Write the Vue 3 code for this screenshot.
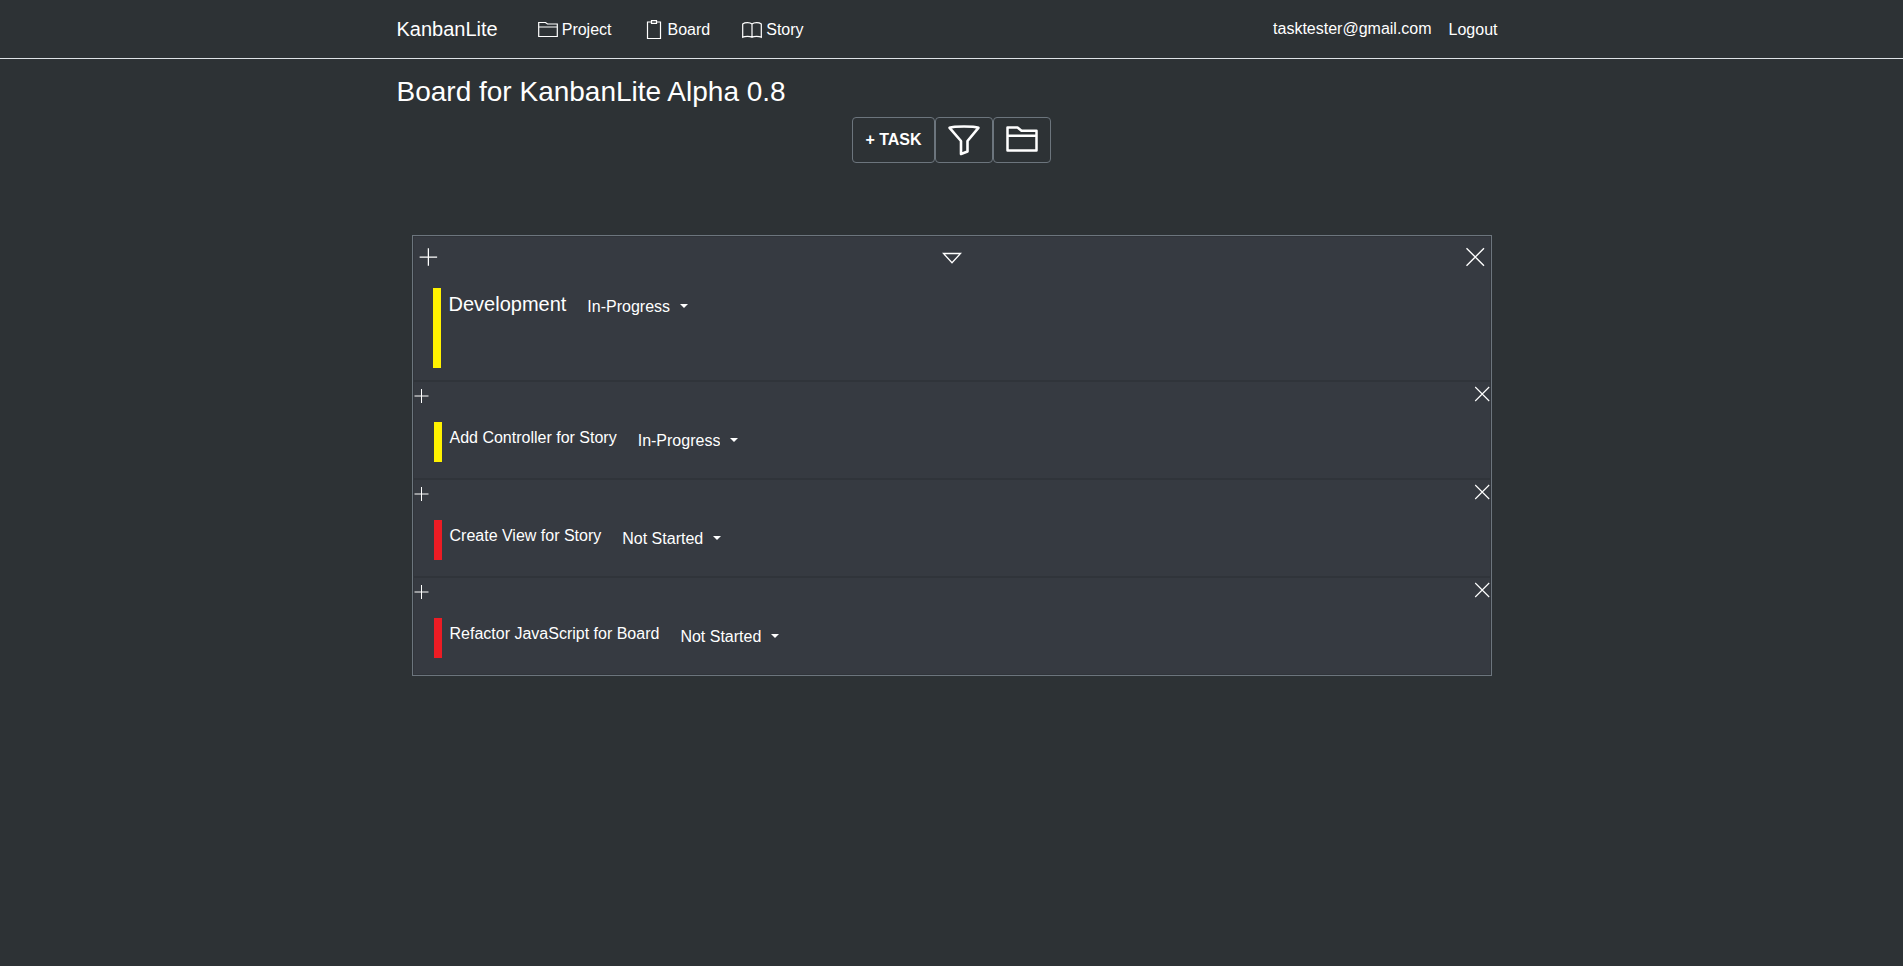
<script setup>
import { reactive } from 'vue'

const statuses = ['Not Started', 'In-Progress', 'Completed']

const items = reactive([
  { id: 1, name: 'Development', status: 'In-Progress', group: true },
  { id: 2, name: 'Add Controller for Story', status: 'In-Progress', group: false },
  { id: 3, name: 'Create View for Story', status: 'Not Started', group: false },
  { id: 4, name: 'Refactor JavaScript for Board', status: 'Not Started', group: false }
])

const tone = (status) => status.toLowerCase().replace(' ', '-')
</script>

<template>
  <div class="page">
    <header class="topbar">
      <div class="container nav">
        <a class="brand" href="#">KanbanLite</a>
        <nav class="links">
          <a href="#">
            <svg width="20" height="20" viewBox="0 0 20 20" fill="none" stroke="currentColor" stroke-width="1.2">
              <path d="M.7 16.500V2.500h6.800l2 1.500h9.800v12.500zM.7 7h18.600" />
            </svg>
            Project
          </a>
          <a href="#">
            <svg width="20" height="20" viewBox="0 0 20 20" fill="none" stroke="currentColor" stroke-width="1.2">
              <path d="M7 2H3.500v16.500h13V2H13M7.500 .7h5v2.600h-5z" />
            </svg>
            Board
          </a>
          <a href="#">
            <svg width="20" height="20" viewBox="0 0 20 20" fill="none" stroke="currentColor" stroke-width="1.2">
              <path d="M10 4C8 2.200 3 2.200.7 4v13.300C3 16 8 16 10 17.300c2-1.300 7-1.300 9.300 0V4C17 2.200 12 2.200 10 4zV17.300" />
            </svg>
            Story
          </a>
        </nav>
        <div class="account">
          <span>tasktester@gmail.com</span>
          <a class="logout" href="#">Logout</a>
        </div>
      </div>
    </header>

    <main class="container">
      <h1>Board for KanbanLite Alpha 0.8</h1>
      <div class="actions">
        <button type="button">+ TASK</button>
        <button type="button" aria-label="Filter">
          <svg width="32" height="32" viewBox="0 0 32 32" fill="none" stroke="currentColor" stroke-width="2.600" stroke-linejoin="round">
            <path d="M1.600 3.800C6 2.100 26 2.100 30.400 3.800L19.500 17v10.500L13 30V17z" />
          </svg>
        </button>
        <button type="button" aria-label="Projects">
          <svg width="32" height="32" viewBox="0 0 32 32" fill="none" stroke="currentColor" stroke-width="2.500" stroke-linejoin="round">
            <path d="M1.500 26.500V3.500h10l4 3.200h15v19.800zM1.500 11.700h29" />
          </svg>
        </button>
      </div>

      <section class="board">
        <article v-for="item in items" :key="item.id" class="item" :class="{ group: item.group }">
          <div class="tools">
            <button class="icon add" type="button" :aria-label="`Add to ${item.name}`">
              <svg viewBox="0 0 16 16" fill="none" stroke="currentColor">
                <path d="M7.500 1v14M.5 8h14" />
              </svg>
            </button>
            <button v-if="item.group" class="icon" type="button" aria-label="Collapse">
              <svg viewBox="0 0 20 20" fill="none" stroke="currentColor" stroke-width="1.300">
                <path d="M1.500 6.500h17L10 15.800z" />
              </svg>
            </button>
            <button class="icon" type="button" :aria-label="`Remove ${item.name}`">
              <svg viewBox="0 0 16 16" fill="none" stroke="currentColor" stroke-width="1.100">
                <path d="M1.200 1l14 14M15.200 1l-14 14" />
              </svg>
            </button>
          </div>
          <div class="body">
            <span class="bar" :class="tone(item.status)"></span>
            <label class="name" :for="`status-${item.id}`">{{ item.name }}</label>
            <span class="status">
              <select :id="`status-${item.id}`" v-model="item.status">
                <option v-for="s in statuses" :key="s">{{ s }}</option>
              </select>
              <i class="caret"></i>
            </span>
          </div>
        </article>
      </section>
    </main>
  </div>
</template>

<style>
body {
  background: #2d3235;
}
</style>

<style scoped>
.page {
  min-height: 100vh;
  color: #fff;
  font: 16px/24px "Liberation Sans", Arial, sans-serif;
}

.page * {
  box-sizing: border-box;
}

a {
  color: inherit;
  text-decoration: none;
}

button,
select {
  color: inherit;
  font: inherit;
  background: none;
  border: 0;
  margin: 0;
  padding: 0;
  cursor: pointer;
}

.container {
  max-width: 1140px;
  margin: 0 auto;
  padding: 0 15px;
}

.topbar {
  border-bottom: 1px solid #dee2e6;
}

.nav {
  display: flex;
  align-items: center;
  height: 58px;
}

.brand {
  font-size: 20px;
}

.links {
  display: flex;
  gap: 32px;
  margin-left: 40px;
  padding-top: 2px;
}

.links a {
  display: flex;
  align-items: center;
  gap: 4px;
}

.account {
  display: flex;
  gap: 17px;
  margin-left: auto;
  margin-right: 9px;
}

.logout {
  padding-top: 1px;
}

h1 {
  margin: 16px 0 8px;
  font-size: 28px;
  line-height: 34px;
  font-weight: 400;
}

.actions {
  display: flex;
  justify-content: center;
}

.actions button {
  height: 46px;
  padding: 0 12px;
  border: 1px solid #6c757d;
  border-radius: 4px;
  font-weight: 700;
}

.actions svg,
.icon svg {
  display: block;
}

.board {
  margin: 72px 15px 0;
  border: 1px solid #6c757d;
  background: #363a41;
}

.item {
  border: 1px solid #30343a;
  padding-bottom: 16px;
}

.tools {
  display: flex;
  justify-content: space-between;
  height: 40px;
  padding-top: 4px;
}

.icon,
.icon svg {
  width: 16px;
  height: 16px;
}

.add {
  margin-top: 2px;
}

.body {
  display: flex;
  align-items: flex-start;
  padding-left: 20px;
}

.bar {
  width: 8px;
  height: 40px;
  margin-right: 8px;
}

.bar.in-progress {
  background: #fff200;
}

.bar.not-started {
  background: #ed1c24;
}

.bar.completed {
  background: #22b14c;
}

.name {
  margin-top: 4px;
}

.status {
  display: inline-grid;
  margin: 7px 0 0 21px;
}

.status select,
.caret {
  grid-area: 1 / 1;
}

.status select {
  appearance: none;
  field-sizing: content;
  height: 24px;
  padding-right: 18px;
}

.status option {
  background: #363a41;
}

.caret {
  align-self: start;
  justify-self: end;
  margin-top: 9px;
  border: 4px solid transparent;
  border-top: 4px solid #fff;
  border-bottom: 0;
  pointer-events: none;
}

.group {
  padding-bottom: 12px;
}

.group .tools {
  height: 51px;
  padding: 10px 5px 0;
}

.group .icon,
.group .icon svg {
  width: 20px;
  height: 20px;
}

.group .add {
  margin-top: 0;
}

.group .body {
  padding-left: 19px;
}

.group .bar {
  height: 80px;
}

.group .name {
  font-size: 20px;
}
</style>
